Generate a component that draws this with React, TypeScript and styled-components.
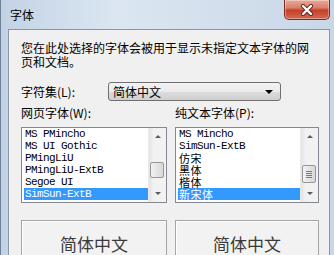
import styled, { createGlobalStyle } from 'styled-components';

const GlobalStyle = createGlobalStyle`
  html, body {
    margin: 0;
    padding: 0;
    overflow: hidden;
    background: #cfdcea;
  }
`;

const uiFont = `"Noto Sans CJK SC", "Noto Sans", sans-serif`;

const Window = styled.div`
  width: 334px;
  height: 255px;
  display: flex;
  flex-direction: column;
  overflow: hidden;
  background: linear-gradient(90deg, #c3d3e5 0%, #dbe6f2 35%, #d3dfec 65%, #c8d7e8 100%);
  border-left: 1px solid #6f8197;
  box-sizing: border-box;
  font-family: ${uiFont};
  font-size: 12px;
  color: #000;
`;

const TitleBar = styled.div`
  height: 29px;
  flex: none;
  display: flex;
  justify-content: space-between;
  align-items: flex-start;
  padding-left: 9px;
  box-sizing: border-box;
`;

const Title = styled.span`
  line-height: 29px;
  font-size: 12px;
  color: #000;
`;

const CloseButton = styled.div`
  width: 46px;
  height: 20px;
  margin-right: 4px;
  display: flex;
  align-items: center;
  justify-content: center;
  box-sizing: border-box;
  border: 1px solid #7c2d22;
  border-top: none;
  border-radius: 0 0 5px 5px;
  background: linear-gradient(180deg, #e9a99a 0%, #d9806d 40%, #c7402a 55%, #d26a4f 100%);
  box-shadow: inset 0 0 0 1px rgba(255, 255, 255, 0.35);
`;

const Client = styled.div`
  flex: 1;
  margin-left: 7px;
  width: 322px;
  box-sizing: border-box;
  background: #f0f0f0;
  border: 1px solid #8796a8;
  border-bottom: none;
  padding: 11px 0 0 12px;
  display: flex;
  flex-direction: column;
`;

const Description = styled.p`
  margin: 0;
  width: 292px;
  line-height: 14px;
  font-size: 12px;
`;

const CharsetRow = styled.div`
  display: flex;
  align-items: center;
  margin-top: 13px;
  height: 19px;
`;

const Label = styled.span<{ $width?: number }>`
  font-size: 12px;
  line-height: 14px;
  width: ${(p) => (p.$width ? `${p.$width}px` : 'auto')};
  flex: none;
`;

const Combo = styled.div`
  width: 173px;
  height: 19px;
  box-sizing: border-box;
  border: 1px solid #707070;
  border-radius: 3px;
  background: linear-gradient(180deg, #f3f3f3 0%, #ebebeb 50%, #dddddd 51%, #cfcfcf 100%);
  display: flex;
  align-items: center;
  justify-content: space-between;
  padding: 0 4px 0 4px;
`;

const ComboText = styled.span`
  font-size: 12px;
  line-height: 17px;
`;

const ComboArrow = styled.span`
  width: 0;
  height: 0;
  border-left: 4px solid transparent;
  border-right: 4px solid transparent;
  border-top: 4px solid #000;
  margin-right: 3px;
`;

const Columns = styled.div`
  display: grid;
  grid-template-columns: 146px 144px;
  column-gap: 8px;
  margin-top: 5px;
`;

const Column = styled.div`
  display: flex;
  flex-direction: column;
`;

const ListBox = styled.div`
  margin-top: 7px;
  height: 76px;
  box-sizing: border-box;
  border: 1px solid #828790;
  background: #fff;
  display: flex;
  overflow: hidden;
`;

const Rows = styled.div`
  flex: 1;
  padding-left: 2px;
  display: flex;
  flex-direction: column;
`;

const Row = styled.div<{ $selected?: boolean; $latin?: boolean }>`
  height: 12px;
  line-height: 12px;
  overflow: hidden;
  padding-left: 1px;
  white-space: nowrap;
  font-family: ${(p) => (p.$latin ? `"Liberation Mono", "DejaVu Sans Mono", monospace` : uiFont)};
  font-size: 11px;
  letter-spacing: ${(p) => (p.$latin ? '-0.6px' : '0.5px')};
  color: ${(p) => (p.$selected ? '#fff' : '#000')};
  background: ${(p) => (p.$selected ? '#3399ff' : 'transparent')};
`;

const ScrollBar = styled.div`
  width: 17px;
  flex: none;
  background: linear-gradient(90deg, #e3e3e3 0%, #f2f2f2 30%, #f2f2f2 100%);
  border-left: 1px solid #eaeaea;
  display: flex;
  flex-direction: column;
  align-items: center;
  justify-content: space-between;
  position: relative;
`;

const ArrowBox = styled.div`
  height: 17px;
  width: 17px;
  display: flex;
  align-items: center;
  justify-content: center;
`;

const ArrowUp = styled.span`
  width: 0;
  height: 0;
  border-left: 3px solid transparent;
  border-right: 3px solid transparent;
  border-bottom: 3px solid #5a5a5a;
`;

const ArrowDown = styled.span`
  width: 0;
  height: 0;
  border-left: 3px solid transparent;
  border-right: 3px solid transparent;
  border-top: 3px solid #5a5a5a;
`;

const Thumb = styled.div<{ $top: number; $height: number }>`
  position: absolute;
  left: 1px;
  top: ${(p) => p.$top}px;
  width: 14px;
  height: ${(p) => p.$height}px;
  box-sizing: border-box;
  border: 1px solid #979797;
  border-radius: 2px;
  background: linear-gradient(90deg, #f3f3f3 0%, #e4e4e4 50%, #d8d8d8 100%);
  display: flex;
  flex-direction: column;
  align-items: center;
  justify-content: center;
  gap: 1px;
`;

const Grip = styled.span`
  width: 6px;
  height: 1px;
  background: #7a7a7a;
`;

const Preview = styled.div`
  margin-top: 17px;
  height: 60px;
  box-sizing: border-box;
  border: 1px solid #a5a5a5;
  box-shadow: inset 1px 1px 0 #ffffff;
  background: #f2f2f2;
  display: flex;
  justify-content: center;
  padding-top: 12px;
  font-size: 17px;
  line-height: 22px;
  color: #3a3a3a;
`;

type Item = { name: string; latin?: boolean; selected?: boolean };

const webFonts: Item[] = [
  { name: 'MS PMincho', latin: true },
  { name: 'MS UI Gothic', latin: true },
  { name: 'PMingLiU', latin: true },
  { name: 'PMingLiU-ExtB', latin: true },
  { name: 'Segoe UI', latin: true },
  { name: 'SimSun-ExtB', latin: true, selected: true },
];

const plainFonts: Item[] = [
  { name: 'MS Mincho', latin: true },
  { name: 'SimSun-ExtB', latin: true },
  { name: '仿宋' },
  { name: '黑体' },
  { name: '楷体' },
  { name: '新宋体', selected: true },
];

function FontList({ items, thumbTop, thumbHeight, grip }: { items: Item[]; thumbTop: number; thumbHeight: number; grip?: boolean }) {
  return (
    <ListBox>
      <Rows>
        {items.map((item) => (
          <Row key={item.name} $latin={item.latin} $selected={item.selected}>
            {item.name}
          </Row>
        ))}
      </Rows>
      <ScrollBar>
        <ArrowBox>
          <ArrowUp />
        </ArrowBox>
        <Thumb $top={thumbTop} $height={thumbHeight}>
          {grip && (
            <>
              <Grip />
              <Grip />
              <Grip />
              <Grip />
            </>
          )}
        </Thumb>
        <ArrowBox>
          <ArrowDown />
        </ArrowBox>
      </ScrollBar>
    </ListBox>
  );
}

export default function App() {
  return (
    <>
      <GlobalStyle />
      <Window>
        <TitleBar>
          <Title>字体</Title>
          <CloseButton>
            <svg width="14" height="12" viewBox="0 0 14 12">
              <path d="M3 2 L11 10 M11 2 L3 10" stroke="#5a2219" strokeWidth="4" strokeLinecap="round" />
              <path d="M3 2 L11 10 M11 2 L3 10" stroke="#ffffff" strokeWidth="2.4" strokeLinecap="round" />
            </svg>
          </CloseButton>
        </TitleBar>
        <Client>
          <Description>您在此处选择的字体会被用于显示未指定文本字体的网页和文档。</Description>
          <CharsetRow>
            <Label $width={87}>字符集(L):</Label>
            <Combo>
              <ComboText>简体中文</ComboText>
              <ComboArrow />
            </Combo>
          </CharsetRow>
          <Columns>
            <Column>
              <Label>网页字体(W):</Label>
              <FontList items={webFonts} thumbTop={34} thumbHeight={16} />
              <Preview>简体中文</Preview>
            </Column>
            <Column>
              <Label>纯文本字体(P):</Label>
              <FontList items={plainFonts} thumbTop={37} thumbHeight={18} grip />
              <Preview>简体中文</Preview>
            </Column>
          </Columns>
        </Client>
      </Window>
    </>
  );
}
